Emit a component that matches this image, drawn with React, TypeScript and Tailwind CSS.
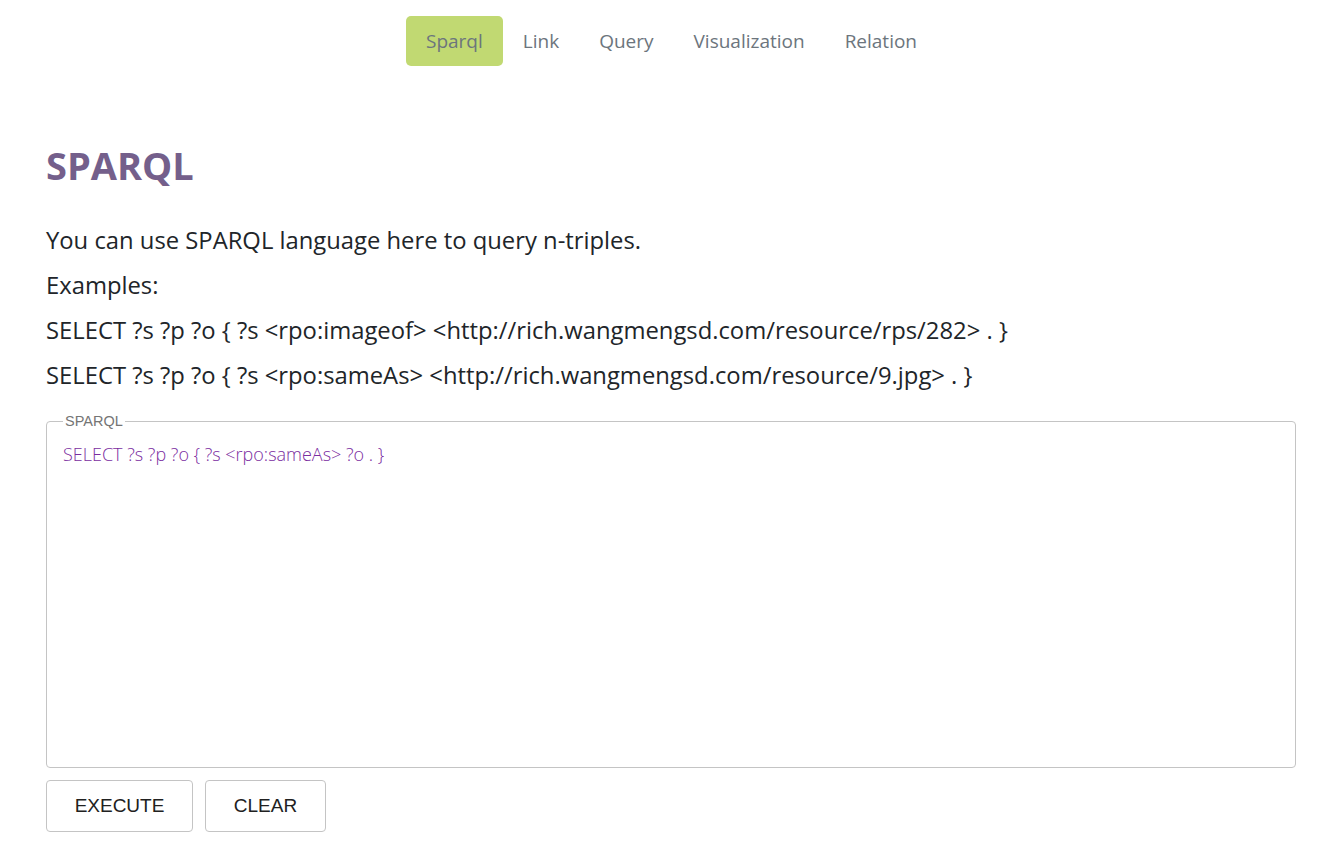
import React from "react";

export default function App() {
  const tabs = ["Sparql", "Link", "Query", "Visualization", "Relation"];
  return (
    <div className="min-h-screen bg-white" style={{ fontFamily: '"Open Sans", "Noto Sans", sans-serif' }}>
      <nav className="flex justify-center pt-4 pl-[4px]">
        {tabs.map((t, i) => (
          <div
            key={t}
            className={`px-5 h-[50px] flex items-center rounded-[5px] text-[19px] text-[#6c757d] ${i === 0 ? "bg-[#c1d972]" : ""}`}
          >
            {t}
          </div>
        ))}
      </nav>
      <main className="pl-[46px] pr-[43px] pt-[76px]">
        <h1 className="text-[38px] font-bold text-[#745f8b] leading-[46px]">SPARQL</h1>
        <div className="mt-[30px] text-[23.8px] text-[#212529] leading-[45px]">
          <p>You can use SPARQL language here to query n-triples.</p>
          <p>Examples:</p>
          <p>SELECT ?s ?p ?o {"{"} ?s &lt;rpo:imageof&gt; &lt;http://rich.wangmengsd.com/resource/rps/282&gt; . {"}"}</p>
          <p>SELECT ?s ?p ?o {"{"} ?s &lt;rpo:sameAs&gt; &lt;http://rich.wangmengsd.com/resource/9.jpg&gt; . {"}"}</p>
        </div>
        <fieldset className="mt-[15px] border border-[#c4c4c4] rounded-[4px] h-[355px] px-4 pb-2">
          <legend className="px-[2px] text-[14.5px] leading-[16px] text-[#757575]" style={{ fontFamily: '"Liberation Sans", Arial, sans-serif' }}>SPARQL</legend>
          <div className="text-[18px] font-light text-[#7b2d9f] mt-[12px]">
            SELECT ?s ?p ?o {"{"} ?s &lt;rpo:sameAs&gt; ?o . {"}"}
          </div>
        </fieldset>
        <div className="flex gap-3 mt-3" style={{ fontFamily: '"Liberation Sans", Arial, sans-serif' }}>
          <button className="w-[147px] h-[52px] border border-[#c4c4c4] rounded-[4px] text-[19px] text-[#212121]">EXECUTE</button>
          <button className="w-[121px] h-[52px] border border-[#c4c4c4] rounded-[4px] text-[19px] text-[#212121]">CLEAR</button>
        </div>
      </main>
    </div>
  );
}
